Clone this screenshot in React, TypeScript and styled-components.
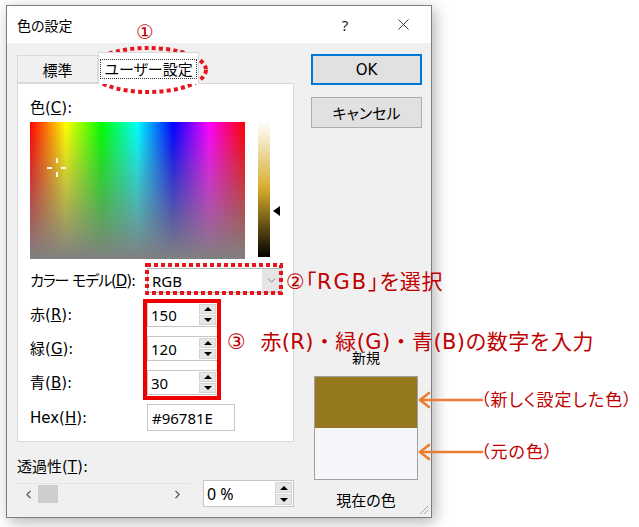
import React from "react";
import styled, { createGlobalStyle } from "styled-components";
import { ChevronDown, ChevronLeft, ChevronRight, X } from "lucide-react";

const labelFont = `"DejaVu Sans", "Noto Sans CJK JP", sans-serif`;
const fieldFont = `"Noto Sans", "Noto Sans CJK JP", sans-serif`;
const noteRed = "#c00000";
const markRed = "#e8141c";
const arrowOrange = "#ed7d31";

const GlobalStyle = createGlobalStyle`
  html, body {
    margin: 0;
    padding: 0;
    background: #fff;
  }
  body {
    font-family: ${fieldFont};
  }
`;

const Page = styled.div`
  position: relative;
  width: 639px;
  height: 527px;
  padding: 5px 0 0 6px;
  box-sizing: border-box;
  overflow: hidden;
  font-family: ${fieldFont};
  font-feature-settings: "palt" 1;
  color: #000;
`;

const Window = styled.div`
  position: relative;
  display: flex;
  flex-direction: column;
  width: 426px;
  height: 513px;
  box-sizing: border-box;
  border: 1px solid #7d7d7d;
  background: #f0f0f0;
  box-shadow: 3px 4px 14px rgba(0, 0, 0, 0.3);
`;

const TitleBar = styled.div`
  display: flex;
  align-items: center;
  height: 37px;
  padding-left: 10px;
  background: #fff;
  font-size: 14px;
`;

const TitleText = styled.div`
  flex: 1;
`;

const TitleButton = styled.div<{ $after: number }>`
  display: flex;
  justify-content: center;
  align-items: center;
  width: 36px;
  height: 37px;
  margin-right: ${(p) => p.$after}px;
  font-size: 15px;
  color: #222;
`;

const Body = styled.div`
  display: flex;
  flex: 1;
  padding-left: 10px;
`;

const LeftColumn = styled.div`
  display: flex;
  flex-direction: column;
  width: 277px;
  padding-top: 9px;
`;

const TabRow = styled.div`
  display: flex;
  align-items: flex-end;
  height: 31px;
`;

const Tab = styled.div<{ $active?: boolean }>`
  position: relative;
  z-index: 1;
  display: flex;
  justify-content: center;
  align-items: center;
  box-sizing: border-box;
  width: ${(p) => (p.$active ? "101px" : "81px")};
  height: ${(p) => (p.$active ? "32px" : "28px")};
  margin-bottom: ${(p) => (p.$active ? "-1px" : "0")};
  border: 1px solid #dadada;
  border-bottom: ${(p) => (p.$active ? "none" : "1px solid #dadada")};
  background: ${(p) => (p.$active ? "#fff" : "#f0f0f0")};
  font-size: 15px;
`;

const FocusRing = styled.span`
  padding: 0 3px;
  outline: 1px dotted #333;
  line-height: 18px;
`;

const Panel = styled.div`
  box-sizing: border-box;
  height: 359px;
  padding: 14px 0 0 12px;
  border: 1px solid #dadada;
  background: #fff;
`;

const Label = styled.div<{ $tight?: boolean }>`
  font-family: ${labelFont};
  font-size: 15px;
  line-height: 20px;
  letter-spacing: ${(p) => (p.$tight ? "-1.1px" : "0")};
  white-space: nowrap;
`;

const SpectrumRow = styled.div`
  display: flex;
  align-items: flex-start;
  margin-top: 4px;
`;

const Spectrum = styled.div`
  position: relative;
  width: 215px;
  height: 137px;
  background: linear-gradient(to bottom, rgba(128, 128, 128, 0), #808080),
    linear-gradient(
      to right,
      #ff0000 0%,
      #ffff00 16.67%,
      #00ff00 33.33%,
      #00ffff 50%,
      #0000ff 66.67%,
      #ff00ff 83.33%,
      #ff0000 100%
    );
`;

const Crosshair = styled.svg`
  position: absolute;
  left: 17px;
  top: 36px;
`;

const LumSlider = styled.div`
  width: 12px;
  height: 135px;
  margin-left: 13px;
  background: linear-gradient(to bottom, #fff, hsl(45, 67%, 50%), #000);
`;

const LumArrow = styled.div`
  width: 0;
  height: 0;
  margin: 84px 0 0 3px;
  border-top: 5px solid transparent;
  border-bottom: 5px solid transparent;
  border-right: 7px solid #000;
`;

const FormGrid = styled.div`
  display: grid;
  grid-template-columns: 117px auto;
  align-items: center;
  row-gap: 9px;
  margin-top: 9px;
`;

const Select = styled.div`
  display: flex;
  align-items: center;
  box-sizing: border-box;
  width: 135px;
  height: 25px;
  border: 1px solid #b5b5b5;
  font-size: 15px;
`;

const SelectValue = styled.div`
  flex: 1;
  padding-left: 4px;
`;

const SelectButton = styled.div`
  display: flex;
  justify-content: center;
  align-items: center;
  width: 19px;
  height: 23px;
  background: #e5e5e5;
  color: #666;
`;

const SpinBox = styled.div<{ $width: number; $height: number }>`
  display: flex;
  box-sizing: border-box;
  width: ${(p) => p.$width}px;
  height: ${(p) => p.$height}px;
  border: 1px solid #c6c6c6;
  background: #fff;
`;

const SpinValue = styled.div<{ $size?: number }>`
  flex: 1;
  display: flex;
  align-items: center;
  padding-left: 3px;
  font-size: ${(p) => p.$size ?? 15}px;
`;

const SpinButtons = styled.div`
  display: flex;
  flex-direction: column;
  gap: 1px;
  width: 17px;
  padding: 1px 1px 1px 0;
`;

const SpinButton = styled.div`
  flex: 1;
  display: flex;
  justify-content: center;
  align-items: center;
  background: #e6e6e6;
  border: 1px solid #d4d4d4;
`;

const Tri = styled.span<{ $dir: "up" | "down" }>`
  width: 0;
  height: 0;
  border-left: 4px solid transparent;
  border-right: 4px solid transparent;
  ${(p) =>
    p.$dir === "up"
      ? "border-bottom: 4px solid #000;"
      : "border-top: 4px solid #000;"}
`;

const TextBox = styled.div`
  display: flex;
  align-items: center;
  box-sizing: border-box;
  width: 88px;
  height: 27px;
  padding-left: 4px;
  border: 1px solid #c6c6c6;
  font-size: 15px;
`;

const TransparencyLabel = styled(Label)`
  margin-top: 15px;
`;

const ScrollRow = styled.div`
  display: flex;
  align-items: center;
  gap: 13px;
  margin-top: 3px;
`;

const ScrollBar = styled.div`
  display: flex;
  align-items: center;
  box-sizing: border-box;
  width: 175px;
  height: 22px;
  padding: 0 6px 0 5px;
  border-top: 1px solid #e4e4e4;
  color: #606060;
`;

const ScrollThumb = styled.div`
  width: 20px;
  height: 18px;
  margin-left: 3px;
  background: #cdcdcd;
`;

const ScrollSpace = styled.div`
  flex: 1;
`;

const RightColumn = styled.div`
  display: flex;
  flex-direction: column;
  width: 111px;
  margin-left: 17px;
  padding: 11px 0 7px;
`;

const DialogButton = styled.div<{ $primary?: boolean }>`
  display: flex;
  justify-content: center;
  align-items: center;
  box-sizing: border-box;
  height: 31px;
  border: ${(p) => (p.$primary ? "2px solid #0078d7" : "1px solid #adadad")};
  background: #e1e1e1;
  font-family: ${labelFont};
  font-size: 15px;
  & + & {
    margin-top: 12px;
  }
`;

const ColorGroup = styled.div`
  display: flex;
  flex-direction: column;
  align-items: center;
  width: 104px;
  margin: auto 0 0 3px;
`;

const SmallCaption = styled.div`
  font-size: 14px;
  line-height: 18px;
`;

const Swatch = styled.div`
  display: flex;
  flex-direction: column;
  box-sizing: border-box;
  width: 104px;
  height: 104px;
  margin-top: 9px;
  border: 1px solid #a0a0a0;
`;

const SwatchHalf = styled.div<{ $color: string }>`
  flex: 1;
  background: ${(p) => p.$color};
`;

const Caption = styled.div`
  margin-top: 10px;
  font-size: 15px;
  line-height: 20px;
`;

const Grip = styled.svg`
  position: absolute;
  right: 2px;
  bottom: 2px;
`;

const Overlay = styled.svg`
  position: absolute;
  left: 0;
  top: 0;
  pointer-events: none;
`;

const Note = styled.div<{
  $x: number;
  $y: number;
  $size: number;
  $prop?: boolean;
  $spacing?: number;
}>`
  position: absolute;
  left: ${(p) => p.$x}px;
  top: ${(p) => p.$y}px;
  font-family: ${labelFont};
  font-size: ${(p) => p.$size}px;
  line-height: 1;
  letter-spacing: ${(p) => p.$spacing ?? 0}px;
  color: ${noteRed};
  white-space: nowrap;
  font-feature-settings: ${(p) => (p.$prop ? '"palt" 1' : "normal")};
`;

const WideLatin = styled.span`
  letter-spacing: 2px;
`;

function Spin({
  value,
  width,
  height,
  size,
}: {
  value: string;
  width: number;
  height: number;
  size?: number;
}) {
  return (
    <SpinBox $width={width} $height={height}>
      <SpinValue $size={size}>{value}</SpinValue>
      <SpinButtons>
        <SpinButton>
          <Tri $dir="up" />
        </SpinButton>
        <SpinButton>
          <Tri $dir="down" />
        </SpinButton>
      </SpinButtons>
    </SpinBox>
  );
}

const channels = [
  { name: "赤", key: "R", value: "150" },
  { name: "緑", key: "G", value: "120" },
  { name: "青", key: "B", value: "30" },
];

export default function App() {
  return (
    <>
      <GlobalStyle />
      <Page>
        <Window>
          <TitleBar>
            <TitleText>色の設定</TitleText>
            <TitleButton $after={22}>?</TitleButton>
            <TitleButton $after={10}>
              <X size={19} strokeWidth={1.1} />
            </TitleButton>
          </TitleBar>
          <Body>
            <LeftColumn>
              <TabRow>
                <Tab>標準</Tab>
                <Tab $active>
                  <FocusRing>ユーザー設定</FocusRing>
                </Tab>
              </TabRow>
              <Panel>
                <Label>
                  色(<u>C</u>):
                </Label>
                <SpectrumRow>
                  <Spectrum>
                    <Crosshair width="20" height="20" viewBox="0 0 20 20">
                      <g stroke="#fff8e6" strokeWidth="2">
                        <line x1="0" y1="10" x2="5" y2="10" />
                        <line x1="14" y1="10" x2="19" y2="10" />
                        <line x1="10" y1="0" x2="10" y2="5" />
                        <line x1="10" y1="14" x2="10" y2="19" />
                      </g>
                    </Crosshair>
                  </Spectrum>
                  <LumSlider />
                  <LumArrow />
                </SpectrumRow>
                <FormGrid>
                  <Label $tight>
                    カラー モデル(<u>D</u>):
                  </Label>
                  <Select>
                    <SelectValue>RGB</SelectValue>
                    <SelectButton>
                      <ChevronDown size={13} strokeWidth={1.4} />
                    </SelectButton>
                  </Select>
                  {channels.map((c) => (
                    <React.Fragment key={c.key}>
                      <Label>
                        {c.name}(<u>{c.key}</u>):
                      </Label>
                      <Spin value={c.value} width={71} height={25} />
                    </React.Fragment>
                  ))}
                  <Label>
                    Hex(<u>H</u>):
                  </Label>
                  <TextBox>#96781E</TextBox>
                </FormGrid>
              </Panel>
              <TransparencyLabel>
                透過性(<u>T</u>):
              </TransparencyLabel>
              <ScrollRow>
                <ScrollBar>
                  <ChevronLeft size={13} strokeWidth={2.4} />
                  <ScrollThumb />
                  <ScrollSpace />
                  <ChevronRight size={13} strokeWidth={2.4} />
                </ScrollBar>
                <Spin value="0 %" width={92} height={27} size={16} />
              </ScrollRow>
            </LeftColumn>
            <RightColumn>
              <DialogButton $primary>OK</DialogButton>
              <DialogButton>キャンセル</DialogButton>
              <ColorGroup>
                <SmallCaption>新規</SmallCaption>
                <Swatch>
                  <SwatchHalf $color="#96781e" />
                  <SwatchHalf $color="#f4f6fa" />
                </Swatch>
                <Caption>現在の色</Caption>
              </ColorGroup>
            </RightColumn>
          </Body>
          <Grip width="11" height="11" viewBox="0 0 11 11">
            <g stroke="#a8a8a8" strokeWidth="1">
              <line x1="10" y1="2" x2="2" y2="10" />
              <line x1="10" y1="6" x2="6" y2="10" />
            </g>
          </Grip>
        </Window>

        <Overlay width="639" height="527" viewBox="0 0 639 527">
          <ellipse
            cx="148"
            cy="70"
            rx="58"
            ry="22"
            fill="none"
            stroke={markRed}
            strokeWidth="4"
            strokeDasharray="4 3.2"
          />
          <rect
            x="147"
            y="265"
            width="134"
            height="28"
            fill="none"
            stroke={markRed}
            strokeWidth="4"
            strokeDasharray="4 3"
          />
          <rect
            x="145"
            y="301"
            width="74"
            height="97"
            fill="none"
            stroke="#ee0000"
            strokeWidth="4"
          />
          <g
            stroke={arrowOrange}
            strokeWidth="2.6"
            fill="none"
            strokeLinecap="round"
            strokeLinejoin="round"
          >
            <line x1="482" y1="400" x2="420" y2="400" />
            <polyline points="429,393 420,400 429,407" />
            <line x1="482" y1="452" x2="420" y2="452" />
            <polyline points="429,445 420,452 429,459" />
          </g>
        </Overlay>

        <Note $x={136} $y={22} $size={20}>
          ①
        </Note>
        <Note $x={286} $y={272} $size={21} $prop $spacing={0.8}>
          ②「<WideLatin>RGB</WideLatin>」を選択
        </Note>
        <Note $x={227} $y={332} $size={21} $spacing={0.4}>
          ③&nbsp;&nbsp;赤(R)・緑(G)・青(B)の数字を入力
        </Note>
        <Note $x={481} $y={392} $size={17} $prop $spacing={1}>
          （新しく設定した色）
        </Note>
        <Note $x={481} $y={444} $size={17} $prop $spacing={1}>
          （元の色）
        </Note>
      </Page>
    </>
  );
}
